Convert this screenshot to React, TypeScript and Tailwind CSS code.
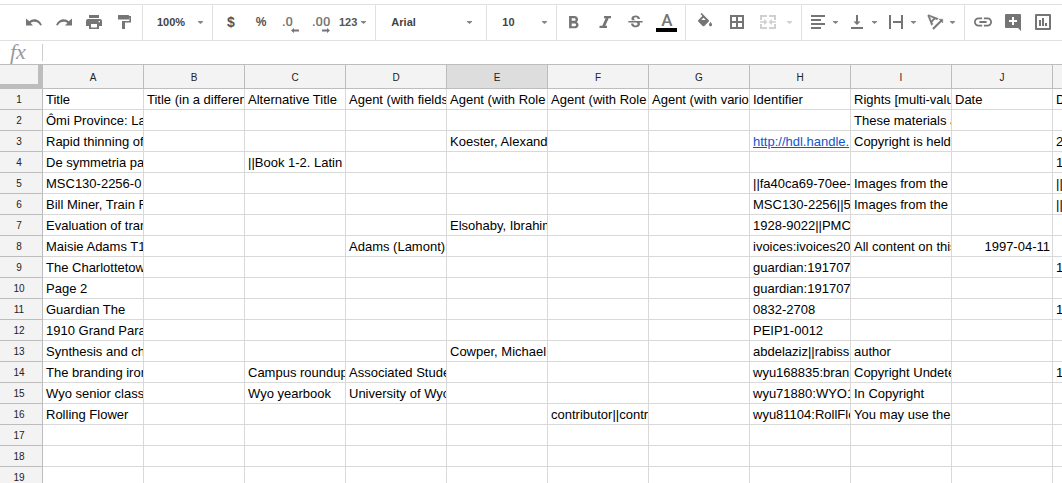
import React from "react";
import { MdStrikethroughS } from "react-icons/md";

type Align = "left" | "right";
type Cell = { text: string; align?: Align; href?: string };
type Row = Record<string, Cell | string>;

const columns = ["A", "B", "C", "D", "E", "F", "G", "H", "I", "J", "K"];
const activeColumn = "E";

const rows: Row[] = [
  {
    A: "Title",
    B: "Title (in a differen",
    C: "Alternative Title",
    D: "Agent (with fields",
    E: "Agent (with Role",
    F: "Agent (with Role",
    G: "Agent (with vario",
    H: "Identifier",
    I: "Rights [multi-valu",
    J: "Date",
    K: "D",
  },
  { A: "Ômi Province: La", I: "These materials a" },
  {
    A: "Rapid thinning of",
    E: "Koester, Alexand",
    H: { text: "http://hdl.handle.", href: "#" },
    I: "Copyright is held",
    K: "2",
  },
  { A: "De symmetria pa", C: "||Book 1-2. Latin", K: "1" },
  { A: "MSC130-2256-0", H: "||fa40ca69-70ee-", I: "Images from the", K: "||" },
  { A: "Bill Miner, Train R", H: "MSC130-2256||5", I: "Images from the", K: "||" },
  { A: "Evaluation of tran", E: "Elsohaby, Ibrahim", H: "1928-9022||PMC" },
  {
    A: "Maisie Adams T1",
    D: "Adams (Lamont)",
    H: "ivoices:ivoices20",
    I: "All content on this",
    J: { text: "1997-04-11", align: "right" },
  },
  { A: "The Charlottetow", H: "guardian:191707", K: "1" },
  { A: "Page 2", H: "guardian:191707" },
  { A: "Guardian The", H: "0832-2708", K: "1" },
  { A: "1910 Grand Para", H: "PEIP1-0012" },
  { A: "Synthesis and ch", E: "Cowper, Michael", H: "abdelaziz||rabiss", I: "author" },
  {
    A: "The branding iron",
    C: "Campus roundup",
    D: "Associated Stude",
    H: "wyu168835:bran",
    I: "Copyright Undete",
    K: "1",
  },
  {
    A: "Wyo senior class",
    C: "Wyo yearbook",
    D: "University of Wyo",
    H: "wyu71880:WYO1",
    I: "In Copyright",
  },
  { A: "Rolling Flower", F: "contributor||contri", H: "wyu81104:RollFlo", I: "You may use the" },
  {},
  {},
  {},
];

function Caret({ faded = false }: { faded?: boolean }) {
  return (
    <svg
      viewBox="0 0 5 3"
      className={`pointer-events-none h-[3px] w-[5px] shrink-0 ${faded ? "text-[#d0d0d0]" : "text-[#858585]"}`}
      fill="currentColor"
      aria-hidden="true"
    >
      <path d="M0 0h5v.8L2.5 3 0 .8z" />
    </svg>
  );
}

function Icon({ children, viewBox = "0 0 18 18" }: { children: React.ReactNode; viewBox?: string }) {
  return (
    <svg viewBox={viewBox} className="size-[18px] shrink-0" fill="currentColor" aria-hidden="true">
      {children}
    </svg>
  );
}

function Tool({ label, children }: { label: string; children: React.ReactNode }) {
  return (
    <button
      type="button"
      aria-label={label}
      className="flex h-[19px] w-[18px] shrink-0 items-start justify-center"
    >
      {children}
    </button>
  );
}

function MenuTool({ label, children, faded }: { label: string; children: React.ReactNode; faded?: boolean }) {
  return (
    <button type="button" aria-label={label} className="flex h-[18px] shrink-0 items-center gap-1.5">
      {children}
      <Caret faded={faded} />
    </button>
  );
}

function Picker({ label, value, width }: { label: string; value: string; width: string }) {
  return (
    <label className="flex items-center">
      <select
        aria-label={label}
        defaultValue={value}
        className={`${width} appearance-none bg-transparent text-[11px] leading-[18px] font-bold text-[#444] outline-none`}
      >
        <option>{value}</option>
      </select>
      <Caret />
    </label>
  );
}

function Group({ className, children }: { className: string; children: React.ReactNode }) {
  return (
    <div className={`flex shrink-0 items-start border-r border-[#e0e0e0] py-2 ${className}`}>{children}</div>
  );
}

function Toolbar() {
  return (
    <div
      role="toolbar"
      aria-label="Formatting"
      className="mt-1 flex shrink-0 overflow-hidden border-y border-[#e0e0e0] text-[#757575]"
    >
      <Group className="gap-3 pr-[9px] pl-[25px]">
        <Tool label="Undo">
          <Icon>
            <path d="M1 5.500v7h7L5.600 10.100C6.600 9.200 7.900 8.700 9.300 8.700c2.700 0 5 1.600 5.900 3.900l1.700-.6C15.800 8.900 12.800 6.200 9.300 6.200c-2 0-3.700.7-5.100 2z" />
          </Icon>
        </Tool>
        <Tool label="Redo">
          <Icon>
            <path d="M17 5.500v7h-7l2.400-2.400C11.400 9.200 10.100 8.700 8.700 8.700c-2.700 0-5 1.600-5.900 3.900L1.100 12C2.200 8.900 5.200 6.200 8.700 6.200c2 0 3.700.7 5.100 2z" />
          </Icon>
        </Tool>
        <Tool label="Print">
          <Icon>
            <path d="M4 2h10v3H4z" />
            <path
              fillRule="evenodd"
              d="M3 6h12a2 2 0 0 1 2 2v5h-3v3H4v-3H1V8a2 2 0 0 1 2-2zm3 5v3.500h6V11zm8.300-3.200a.8.8 0 1 0 0 1.600.8.8 0 0 0 0-1.600z"
            />
          </Icon>
        </Tool>
        <Tool label="Paint format">
          <Icon>
            <path d="M3.500 2h10a.5.500 0 0 1 .5.500V3h2v6.500h-6V16H7V8h7.300V4.500H14V6a.5.500 0 0 1-.5.500h-10A.5.500 0 0 1 3 6V2.500a.5.500 0 0 1 .5-.5z" />
          </Icon>
        </Tool>
      </Group>

      <Group className="pr-[9px] pl-[14px]">
        <Picker label="Zoom" value="100%" width="w-[41px]" />
      </Group>

      <Group className="gap-3 pr-[9px] pl-[9px] font-bold text-[#555]">
        <button type="button" aria-label="Format as currency" className="w-[18px] text-[14px] leading-[18px]">
          $
        </button>
        <button type="button" aria-label="Format as percent" className="w-[18px] text-[12px] leading-[18px]">
          %
        </button>
        <button
          type="button"
          aria-label="Decrease decimal places"
          className="relative w-[18px] text-left font-[Roboto,sans-serif] text-[13px] leading-[18px] font-medium text-[#757575]"
        >
          .0
          <svg viewBox="0 0 8 5" className="absolute top-[15px] left-[9px] h-[5px] w-2" fill="currentColor" aria-hidden="true">
            <path d="M0 2.500 3 0v1.500h5v2H3V5z" />
          </svg>
        </button>
        <button
          type="button"
          aria-label="Increase decimal places"
          className="relative w-[18px] text-left font-[Roboto,sans-serif] text-[13px] leading-[18px] font-medium text-[#757575]"
        >
          .00
          <svg viewBox="0 0 8 5" className="absolute top-[15px] left-[10px] h-[5px] w-2" fill="currentColor" aria-hidden="true">
            <path d="M8 2.500 5 0v1.500H0v2h5V5z" />
          </svg>
        </button>
        <button type="button" aria-label="More formats" className="-ml-[3px] flex items-center gap-1 text-[11px] leading-[18px]">
          123
          <Caret />
        </button>
      </Group>

      <Group className="pr-[14px] pl-[15px]">
        <Picker label="Font" value="Arial" width="w-[76px]" />
      </Group>

      <Group className="pr-[9px] pl-[15px]">
        <Picker label="Font size" value="10" width="w-[40px]" />
      </Group>

      <Group className="gap-3 pr-[8px] pl-[9px]">
        <Tool label="Bold">
          <Icon>
            <path
              transform="translate(-3.100 -.5) scale(.88)"
              d="M15.600 10.790c.97-.67 1.650-1.770 1.650-2.790 0-2.260-1.750-4-4-4H7v14h7.040c2.090 0 3.710-1.700 3.710-3.790 0-1.520-.86-2.820-2.150-3.420zM10 6.500h3c.83 0 1.500.67 1.500 1.500s-.67 1.500-1.500 1.500h-3v-3zm3.500 9H10v-3h3.500c.83 0 1.500.67 1.500 1.500s-.67 1.500-1.500 1.500z"
            />
          </Icon>
        </Tool>
        <Tool label="Italic">
          <Icon>
            <path d="M8 3h7v2.200h-2.300L9.300 12.800H11V15H3.500v-2.200h2.800L9.700 5.200H8z" />
          </Icon>
        </Tool>
        <Tool label="Strikethrough">
          <MdStrikethroughS className="size-[19px] shrink-0" />
        </Tool>
        <button
          type="button"
          aria-label="Text color"
          className="flex h-[19px] w-[21px] flex-col items-center justify-between font-[Roboto,sans-serif] text-[17px] leading-[15px] font-medium"
        >
          A
          <span className="h-1 w-full shrink-0 bg-black" />
        </button>
      </Group>

      <Group className="gap-[13px] pr-[9px] pl-[10px]">
        <Tool label="Fill color">
          <Icon>
            <path
              transform="translate(-.3 0) scale(.78)"
              d="M16.560 8.940L7.620 0 6.210 1.410l2.380 2.380-5.150 5.150c-.59.59-.59 1.540 0 2.120l5.500 5.500c.29.29.68.44 1.060.44s.77-.15 1.060-.44l5.500-5.500c.59-.58.59-1.530 0-2.120zM7 9L10 6 13 9zM19 11.500s-2 2.170-2 3.500c0 1.100.9 2 2 2s2-.9 2-2c0-1.330-2-3.500-2-3.500z"
              fillRule="evenodd"
            />
          </Icon>
        </Tool>
        <Tool label="Borders">
          <Icon>
            <path fillRule="evenodd" d="M3 2h14v14H3zM5 4v4h4V4zm6 0v4h4V4zM5 10v4h4v-4zm6 0v4h4v-4z" />
          </Icon>
        </Tool>
        <button
          type="button"
          aria-label="Merge cells"
          disabled
          className="flex h-[18px] items-center gap-[11px] text-[#d0d0d0]"
        >
          <Icon>
            <path d="M2 2h7v2H4v3H2zM11 2h7v5h-2V4h-5zM2 11h2v3h5v2H2zM16 11h2v5h-7v-2h5z" />
            <path d="M2 8.200h4V6l3.500 3L6 12V9.800H2zM18 8.200h-4V6l-3.500 3 3.500 3V9.800h4z" />
          </Icon>
          <Caret faded />
        </button>
      </Group>

      <Group className="gap-2.5 pr-[9px] pl-[7px]">
        <MenuTool label="Horizontal align">
          <Icon>
            <path d="M2 2h14v2H2zM2 6h10v2H2zM2 10h14v2H2zM2 14h10v2H2z" />
          </Icon>
        </MenuTool>
        <MenuTool label="Vertical align">
          <Icon>
            <path d="M8 2h2v6.500h2.500L9 12 5.500 8.500H8zM3 14h12v2H3z" />
          </Icon>
        </MenuTool>
        <MenuTool label="Text wrapping">
          <Icon>
            <path d="M2 2h2v14H2zM14 2h2v14h-2zM6 8h8v2H6z" />
          </Icon>
        </MenuTool>
        <MenuTool label="Text rotation">
          <Icon viewBox="1.5 2.3 20.5 20.5">
            <path
              stroke="currentColor"
              strokeWidth=".5"
              d="M4.490 4.210L3.430 5.270 7.850 16.400l1.480-1.480-.92-2.190 3.540-3.540 2.190.92 1.480-1.480L4.490 4.210zm3.090 6.800L5.360 6.140l4.870 2.230-2.650 2.640zm12.990-1.680h-4.240l1.410 1.410-8.840 8.840L10.320 21l8.840-8.840 1.410 1.410V9.330z"
            />
          </Icon>
        </MenuTool>
      </Group>

      <div className="flex items-start gap-3 py-2 pl-[9px]">
        <Tool label="Insert link">
          <Icon viewBox="2 2 20 20">
            <path d="M3.900 12c0-1.710 1.390-3.100 3.100-3.100h4V7H7c-2.760 0-5 2.240-5 5s2.240 5 5 5h4v-1.900H7c-1.710 0-3.100-1.390-3.100-3.100zM8 13h8v-2H8v2zm9-6h-4v1.900h4c1.710 0 3.100 1.390 3.100 3.100s-1.390 3.100-3.100 3.100h-4V17h4c2.760 0 5-2.240 5-5s-2.240-5-5-5z" />
          </Icon>
        </Tool>
        <Tool label="Insert comment">
          <Icon>
            <path
              fillRule="evenodd"
              d="M2 1h14a1 1 0 0 1 1 1v16l-3-3H2a1 1 0 0 1-1-1V2a1 1 0 0 1 1-1zm6 3v3H5v2h3v3h2V9h3V7h-3V4z"
            />
          </Icon>
        </Tool>
        <Tool label="Insert chart">
          <Icon>
            <path
              fillRule="evenodd"
              d="M2 1h14a1 1 0 0 1 1 1v14a1 1 0 0 1-1 1H2a1 1 0 0 1-1-1V2a1 1 0 0 1 1-1zm1 2v12h12V3z"
            />
            <path d="M5 7h2v6H5zM8 5h2v8H8zM11 10h2v3h-2z" />
          </Icon>
        </Tool>
      </div>
    </div>
  );
}

function FormulaBar() {
  return (
    <label className="flex h-[23px] shrink-0 items-center">
      <span className="w-[42px] shrink-0 pb-0.5 pl-2.5 font-['Liberation_Serif',serif] text-[22px] leading-[23px] text-[#999] italic">
        fx
      </span>
      <input aria-label="Formula" className="h-[17px] min-w-0 flex-1 border-l border-[#ccc] px-1 text-[13px] outline-none" />
    </label>
  );
}

function SheetCell({ value }: { value?: Cell | string }) {
  const cell = typeof value === "string" ? { text: value } : value;
  const right = cell && "align" in cell && cell.align === "right";
  const href = cell && "href" in cell ? cell.href : undefined;
  return (
    <td
      className={`h-[21px] overflow-hidden border-r border-b border-[#d9d9d9] p-0 pt-0.5 pl-[3px] leading-[18px] whitespace-nowrap ${right ? "text-right" : "text-left"}`}
    >
      {href ? (
        <a href={href} className="text-[#1155cc] underline">
          {cell?.text}
        </a>
      ) : (
        <span className={right ? "pr-[2px]" : ""}>{cell?.text}</span>
      )}
    </td>
  );
}

function Sheet() {
  return (
    <div className="min-h-0 flex-1 overflow-hidden border-t border-[#bdbdbd]">
      <table className="w-[1154px] table-fixed border-separate border-spacing-0 text-[13px] text-black">
        <colgroup>
          <col className="w-[43px]" />
          {columns.map((name) => (
            <col key={name} className="w-[101px]" />
          ))}
        </colgroup>
        <thead>
          <tr>
            <td className="h-6 border-r-[5px] border-b-[5px] border-[#bdbdbd] bg-[#f3f3f3] p-0" />
            {columns.map((name) => (
              <th
                key={name}
                scope="col"
                className={`h-6 border-r border-b border-[#bdbdbd] p-0 pt-0.5 text-[10px] leading-4 font-normal text-[#222] ${name === activeColumn ? "bg-[#dddddd]" : "bg-[#f3f3f3]"}`}
              >
                {name}
              </th>
            ))}
          </tr>
        </thead>
        <tbody>
          {rows.map((row, index) => (
            <tr key={index}>
              <th
                scope="row"
                className="h-[21px] border-r border-b border-[#bdbdbd] bg-[#f3f3f3] p-0 pt-0.5 pr-1 text-[10px] leading-4 font-normal text-[#222]"
              >
                {index + 1}
              </th>
              {columns.map((name) => (
                <SheetCell key={name} value={row[name]} />
              ))}
            </tr>
          ))}
        </tbody>
      </table>
    </div>
  );
}

export default function App() {
  return (
    <div className="flex h-screen flex-col overflow-hidden bg-white font-['Liberation_Sans',Arial,sans-serif]">
      <Toolbar />
      <FormulaBar />
      <Sheet />
    </div>
  );
}
